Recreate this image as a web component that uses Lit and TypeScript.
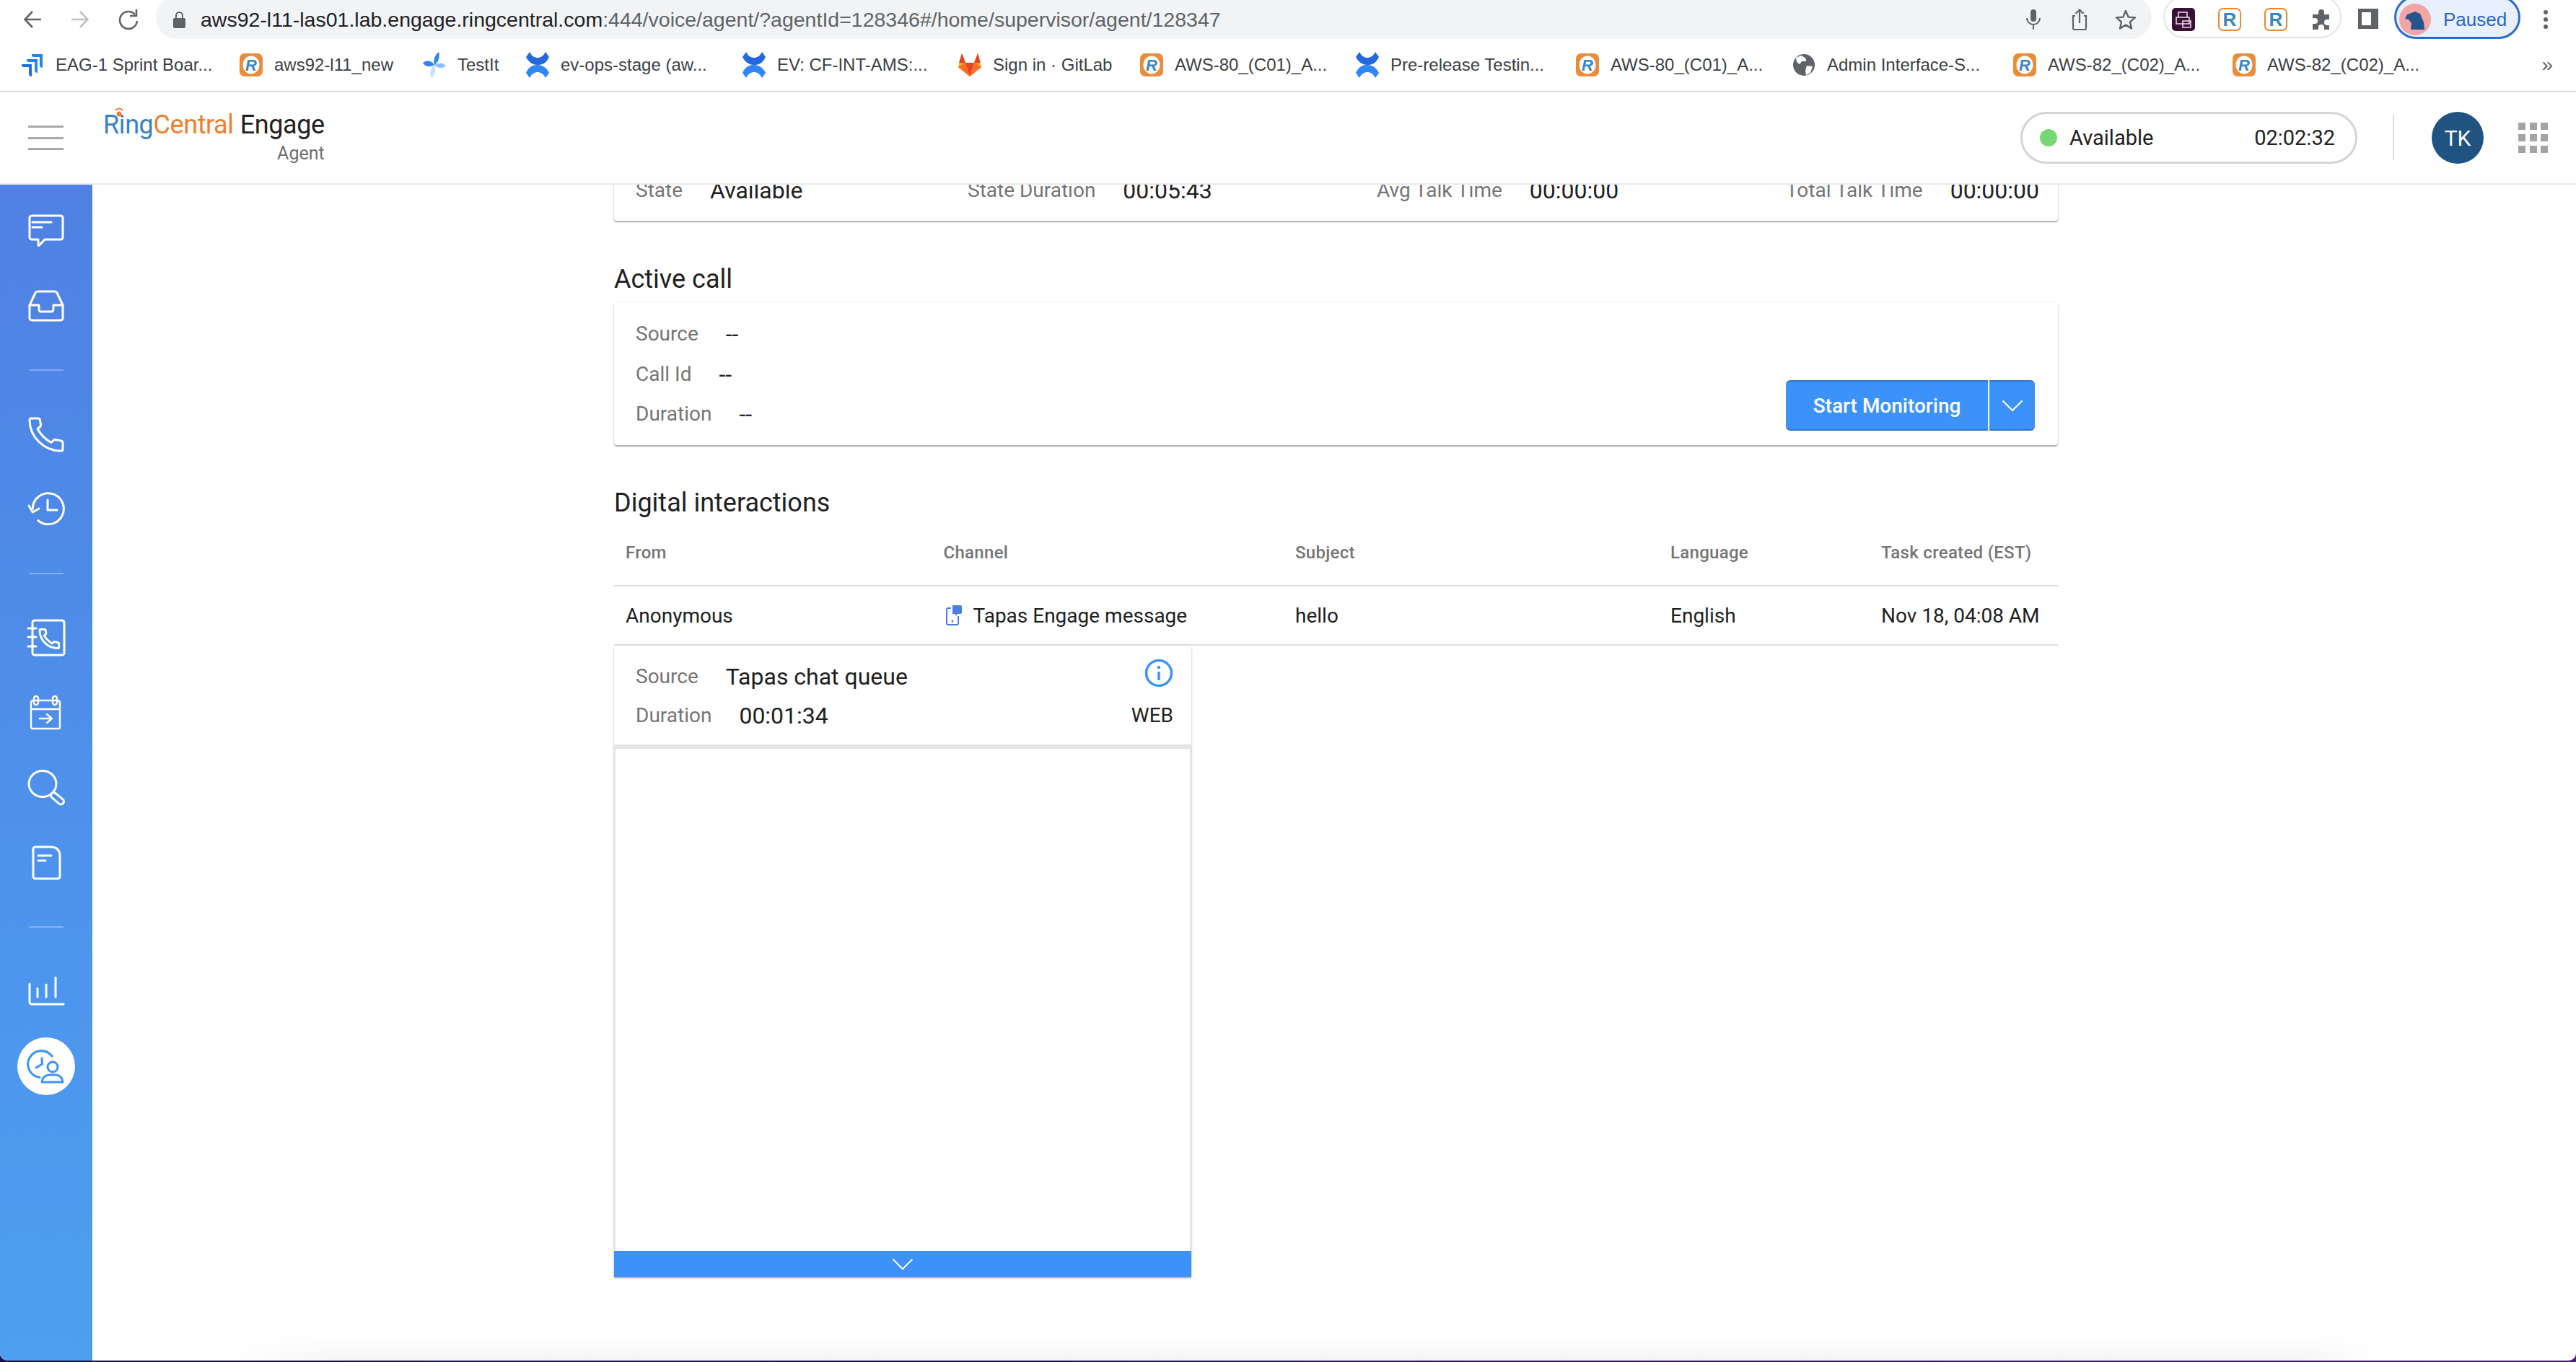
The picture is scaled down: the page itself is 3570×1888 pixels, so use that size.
import { LitElement, html, css } from 'lit';
import { customElement } from 'lit/decorators.js';

const PHONE_PATH = 'M7 6H17Q19 6 19.4 8L20.5 15Q20.6 17 19 18L16 20.5C20 28 27 35 35 39.5L38 36.5Q39.5 35 41.5 35.5L48.5 37Q51 37.5 51 40V49Q51 51 48 51C25 51 5.5 32 5 9Q5 6 7 6Z';

const rImg = html`<svg width="32" height="32" viewBox="0 0 32 32"><rect width="32" height="32" rx="7" fill="#ea8d3a"/><ellipse cx="16" cy="16" rx="11.5" ry="12.5" fill="#fff"/><text x="16" y="24" text-anchor="middle" font-family="Liberation Sans" font-size="22" font-weight="700" font-style="italic" fill="#3a86c0">R</text></svg>`;
const rExt = html`<svg width="32" height="32" viewBox="0 0 32 32"><rect x="1" y="1" width="30" height="30" rx="6" fill="#fff" stroke="#ef8632" stroke-width="2"/><text x="16" y="25" text-anchor="middle" font-family="Liberation Sans" font-size="26" font-weight="700" fill="#3a86c0">R</text></svg>`;
const jira = html`<svg width="32" height="32" viewBox="0 0 32 32" fill="#2d7ff0"><path d="M15 1H30V20Q26 20 26 16V5H17Q15 5 15 1Z"/><path d="M8 8H23V27Q19 27 19 23V12H10Q8 12 8 8Z" fill="#2684ff"/><path d="M1 15H15V32Q11 32 11 28V19H3Q1 19 1 15Z" fill="#1f6fe0"/></svg>`;
const testit = html`<svg width="32" height="36" viewBox="0 0 32 36"><path d="M16 18C14 10 17 4 22 0C24 7 22 14 16 18Z" fill="#2f86f0"/><path d="M16 18C24 14 29 15 32 20C26 23 20 23 16 18Z" fill="#8ec0f7"/><path d="M16 18C19 26 16 32 12 36C9 29 11 22 16 18Z" fill="#c4def9"/><path d="M16 18C8 22 3 20 0 15C6 11 12 12 16 18Z" fill="#2f86f0"/></svg>`;
const conf = html`<svg width="32" height="36" viewBox="0 0 32 36" fill="#2468e0"><path d="M0 7L5 0C8 6 12 8 16 8S24 6 27 0L32 7C28 16 22 18 16 18C8 18 3 13 0 7Z"/><path d="M32 29L27 36C24 30 20 28 16 28S8 30 5 36L0 29C4 20 10 18 16 18C24 18 29 23 32 29Z" fill="#2f86f8"/></svg>`;
const gitlab = html`<svg width="32" height="32" viewBox="0 0 32 32"><path d="M16 32L0 19L5 0L10 13H22L27 0L32 19Z" fill="#fca326"/><path d="M16 32L10 13H22Z" fill="#e24329"/><path d="M16 32L0 19L10 13Z" fill="#fc6d26"/><path d="M16 32L32 19L22 13Z" fill="#fc6d26"/><path d="M5 0L10 13H1Z" fill="#e24329"/><path d="M27 0L22 13H31Z" fill="#e24329"/></svg>`;
const globe = html`<svg width="32" height="32" viewBox="0 0 32 32"><circle cx="16" cy="16" r="15" fill="#5f6368"/><path d="M12 3C17 5 20 8 19 11L13 11L10 15L6 12L5 6ZM20 17L28 18L25 27L19 30L18 24Z" fill="#fff"/></svg>`;

const bookmarks = [
  { icon: jira, label: 'EAG-1 Sprint Boar...', w: 303 },
  { icon: rImg, label: 'aws92-l11_new', w: 254 },
  { icon: testit, label: 'TestIt', w: 143 },
  { icon: conf, label: 'ev-ops-stage (aw...', w: 300 },
  { icon: conf, label: 'EV: CF-INT-AMS:...', w: 299 },
  { icon: gitlab, label: 'Sign in · GitLab', w: 252 },
  { icon: rImg, label: 'AWS-80_(C01)_A...', w: 299 },
  { icon: conf, label: 'Pre-release Testin...', w: 305 },
  { icon: rImg, label: 'AWS-80_(C01)_A...', w: 300 },
  { icon: globe, label: 'Admin Interface-S...', w: 306 },
  { icon: rImg, label: 'AWS-82_(C02)_A...', w: 304 },
  { icon: rImg, label: 'AWS-82_(C02)_A...', w: 300 },
];

const railIcon = (body: unknown) => html`<svg class="rail-svg" width="56" height="56" viewBox="0 0 56 56">${body}</svg>`;

type RailEntry = { sep: true } | { sep?: false; active?: boolean; svg: unknown };

const rail: RailEntry[] = [
  { svg: html`<svg class="rail-svg" width="56" height="56" viewBox="0 0 56 56"><path d="M8 7H48a3 3 0 0 1 3 3V37a3 3 0 0 1-3 3H26L18.5 48Q17 49.5 17 47V40H8a3 3 0 0 1-3-3V10a3 3 0 0 1 3-3Z"/><path d="M9 16H35M9 23H22"/></svg>` },
  { svg: html`<svg class="rail-svg" width="56" height="56" viewBox="0 0 56 56"><path d="M5 27L13 10Q14 8 16 8H40Q42 8 43 10L51 27V45a3 3 0 0 1-3 3H8a3 3 0 0 1-3-3Z"/><path d="M5 27H18V33a3 3 0 0 0 3 3H35a3 3 0 0 0 3-3V27H51"/></svg>` },
  { sep: true },
  { svg: html`<svg class="rail-svg" width="56" height="56" viewBox="0 0 56 56"><path d=${PHONE_PATH}/></svg>` },
  { svg: html`<svg class="rail-svg" width="56" height="56" viewBox="0 0 56 56"><path d="M9.3 27A21.5 21.5 0 1 1 16.7 43.5"/><path d="M4 23L9.3 32L18 27"/><path d="M30 15V29H43"/></svg>` },
  { sep: true },
  { svg: html`<svg class="rail-svg" width="56" height="56" viewBox="0 0 56 56"><rect x="9" y="4" width="44" height="48" rx="3"/><path d="M3 15H14M3 27H14M3 40H14"/><g transform="translate(16 13) scale(.58)" style="stroke-width:5"><path d=${PHONE_PATH}/></g></svg>` },
  { svg: html`<svg class="rail-svg thin" width="56" height="56" viewBox="0 0 56 56"><path d="M11 11H43Q47 11 47 14V48Q47 50 45 50H9Q7 50 7 48V14Q7 11 11 11ZM7 23H47"/><rect x="11" y="5" width="6" height="12" rx="3"/><rect x="37" y="5" width="6" height="12" rx="3"/><path d="M19 36H36M29 30L36 36L29 42"/></svg>` },
  { svg: html`<svg class="rail-svg" width="56" height="56" viewBox="0 0 56 56"><ellipse cx="23" cy="22.6" rx="19" ry="18"/><rect x="0" y="0" width="21" height="8" rx="4" transform="translate(38 33) rotate(40)"/></svg>` },
  { svg: html`<svg class="rail-svg" width="56" height="56" viewBox="0 0 56 56"><path d="M13 6H34Q47 6 47 19V47a3 3 0 0 1-3 3H13a3 3 0 0 1-3-3V9a3 3 0 0 1 3-3Z"/><path d="M17 18H35M17 25H27"/></svg>` },
  { sep: true },
  { svg: html`<svg class="rail-svg" width="56" height="56" viewBox="0 0 56 56"><path d="M5 18V43a3 3 0 0 0 3 3H52"/><path d="M16 24V36M28 19V36M41 9V36"/></svg>` },
  { active: true, svg: html`<svg class="rail-svg blue" width="56" height="56" viewBox="0 0 56 56"><path d="M36 14A18.5 18.5 0 1 0 19 43.5"/><path d="M22 17L22.5 25L14 30"/><circle cx="37" cy="29" r="7"/><path d="M22 50Q23 41 32 40H42Q50 41 51 50Z"/></svg>` },
];

@customElement('app-root')
export class AppRoot extends LitElement {
  static styles = css`
    :host {
      display: block;
      width: 3570px;
      height: 1888px;
      overflow: hidden;
      background: linear-gradient(90deg, #16124e 0%, #1d1463 40%, #3a1878 65%, #4a1c82 100%);
      font-family: Roboto, sans-serif;
      color: #212121;
    }
    .window {
      height: 1886px;
      background: #fff;
      border-radius: 0 0 10px 10px;
      overflow: hidden;
      display: flex;
      flex-direction: column;
    }

    /* browser toolbar */
    .toolbar {
      height: 54px;
      flex: none;
      display: flex;
      align-items: flex-start;
      overflow: hidden;
      font-family: 'Liberation Sans', sans-serif;
    }
    .nav-btns {
      width: 216px;
      flex: none;
      height: 54px;
      display: flex;
      align-items: center;
      padding-left: 32px;
      box-sizing: border-box;
      gap: 40px;
    }
    .address {
      width: 2766px;
      flex: none;
      height: 60px;
      margin-top: -6px;
      padding: 6px 4px 0 24px;
      box-sizing: border-box;
      border-radius: 30px;
      background: #f1f3f5;
      display: flex;
      align-items: center;
    }
    .lock { margin-right: 21px; flex: none; }
    .url { flex: 1; font-size: 28.5px; color: #5f6368; white-space: nowrap; }
    .url b { font-weight: 400; color: #202124; }
    .addr-btn { width: 64px; display: flex; justify-content: center; flex: none; }
    .ext-pill {
      width: 247px;
      height: 59px;
      margin: -6px 0 0 16px;
      padding: 6px 0 0 10px;
      box-sizing: border-box;
      flex: none;
      display: flex;
      align-items: center;
      gap: 32px;
      border: 2px solid #e3e3e3;
      border-radius: 30px;
    }
    .side-panel { margin: 12px 22px 0 23px; flex: none; display: block; }
    .profile {
      width: 175px;
      height: 60px;
      margin-top: -6px;
      padding: 6px 0 0 4px;
      box-sizing: border-box;
      flex: none;
      display: flex;
      align-items: center;
      gap: 17px;
      border: 3px solid #2b6dcf;
      border-radius: 30px;
      background: #e8f0fe;
      color: #2a66c8;
      font-size: 26px;
    }
    .profile-pic {
      width: 44px;
      height: 44px;
      flex: none;
      border-radius: 50%;
      background: #f2a5a5;
    }
    .kebab { margin: 13px 0 0 31px; display: block; flex: none; }

    /* bookmarks */
    .bookmarks {
      height: 74px;
      flex: none;
      box-sizing: border-box;
      padding-left: 29px;
      padding-right: 32px;
      display: flex;
      align-items: center;
      border-bottom: 2px solid #dcdcdc;
      font-family: 'Liberation Sans', sans-serif;
      font-size: 24px;
      color: #3c4043;
    }
    .bm { display: flex; align-items: center; gap: 16px; white-space: nowrap; flex: none; }
    .bm svg { flex: none; display: block; }
    .more { margin-left: auto; font-size: 28px; color: #5f6368; }

    /* app header */
    .app-header {
      height: 128px;
      flex: none;
      box-sizing: border-box;
      border-bottom: 2px solid #e8e8e8;
      display: flex;
      align-items: center;
      padding-left: 39px;
    }
    .burger { width: 49px; display: flex; flex-direction: column; gap: 12.5px; flex: none; }
    .burger i { display: block; height: 3px; background: #a8a8a8; }
    .logo { margin-left: 55px; display: flex; flex-direction: column; align-items: flex-end; position: relative; }
    .logo-main { font-size: 36px; line-height: 42px; letter-spacing: -0.4px; white-space: nowrap; }
    .logo-main .ring { color: #3a82c4; }
    .logo-main .central { color: #ef7f2d; margin-right: 9px; }
    .logo-dot { position: absolute; left: 14px; top: -4px; }
    .logo-sub { font-size: 25px; line-height: 34px; color: #6f6f6f; margin-top: 2px; }
    .status {
      margin-left: auto;
      width: 467px;
      height: 72px;
      box-sizing: border-box;
      border: 3px solid #d4d4d4;
      border-radius: 36px;
      display: flex;
      align-items: center;
      padding: 0 28px 0 24px;
      font-size: 29px;
    }
    .status-dot { width: 24px; height: 24px; border-radius: 50%; background: #75d874; margin-right: 17px; }
    .status-time { margin-left: auto; }
    .hdr-sep { width: 2px; height: 62px; background: #dcdcdc; margin-left: 49px; }
    .avatar {
      width: 72px;
      height: 72px;
      margin-left: 52px;
      border-radius: 50%;
      background: #1f5482;
      color: #fff;
      font-size: 30px;
      display: flex;
      align-items: center;
      justify-content: center;
    }
    .apps { margin: 0 39px 0 48px; display: grid; grid-template-columns: repeat(3, 10px); grid-auto-rows: 10px; gap: 6px 5.5px; }
    .apps i { background: #a3a3a3; }

    /* body */
    .body { flex: 1; min-height: 0; display: flex; }
    .rail {
      width: 128px;
      flex: none;
      box-sizing: border-box;
      padding-top: 12px;
      background: linear-gradient(180deg, #5081e3 0%, #4c9ff1 100%);
      border-bottom-left-radius: 10px;
      display: flex;
      flex-direction: column;
    }
    .rail-item { height: 104px; flex: none; display: flex; align-items: center; justify-content: center; }
    .rail-item.on > div {
      width: 80px;
      height: 80px;
      border-radius: 50%;
      background: #fff;
      display: flex;
      align-items: center;
      justify-content: center;
    }
    .rail-sep { height: 74px; flex: none; display: flex; align-items: center; justify-content: center; }
    .rail-sep i { display: block; width: 48px; height: 2px; background: rgba(255, 255, 255, 0.3); }
    .rail-svg { display: block; fill: none; stroke: #fff; stroke-width: 3; stroke-linecap: round; stroke-linejoin: round; }
    .rail-svg.thin { stroke-width: 2.4; }
    .rail-svg.blue { stroke: #3d92f9; }

    .main { flex: 1; min-width: 0; position: relative; overflow: hidden; }
    .page { width: 2001px; margin: -36px 0 0 723px; }
    .bottom-fade {
      position: absolute;
      left: 180px;
      right: 270px;
      bottom: 0;
      height: 36px;
      background: linear-gradient(180deg, rgba(244, 244, 244, 0), #f4f4f4);
      -webkit-mask-image: linear-gradient(90deg, transparent, #000 6%, #000 96%, transparent);
      mask-image: linear-gradient(90deg, transparent, #000 6%, #000 96%, transparent);
    }

    .card {
      background: #fff;
      border-radius: 4px;
      box-shadow: 0 2px 2px rgba(0, 0, 0, 0.3), 0 0 5px rgba(0, 0, 0, 0.08);
    }
    .kv { display: flex; gap: 38px; line-height: 40px; white-space: nowrap; }
    .kv .k { font-size: 28px; color: #757575; }
    .kv .v { font-size: 32px; color: #212121; }

    .stats {
      padding: 24px 32px 22px 30px;
      display: grid;
      grid-template-columns: 460px 567px 567px 1fr;
    }
    h2 {
      margin: 57px 0 9px;
      font-size: 36px;
      font-weight: 400;
      line-height: 48px;
    }
    .active-call {
      box-sizing: border-box;
      height: 197px;
      padding: 23px 32px 20px 30px;
      display: flex;
      justify-content: space-between;
      align-items: flex-end;
    }
    .active-call .rows { display: flex; flex-direction: column; gap: 15.5px; align-self: flex-start; }
    .split { display: flex; gap: 2px; flex: none; }
    .split > div {
      height: 70px;
      box-sizing: border-box;
      background: #3d92f9;
      border: solid #2f74cc;
      border-width: 2px 0;
      color: #fff;
      font-size: 28px;
      font-weight: 500;
      display: flex;
      align-items: center;
      justify-content: center;
    }
    .split .go { width: 280px; border-radius: 6px 0 0 6px; }
    .split .caret { width: 63px; border-radius: 0 6px 6px 0; }

    h2.digital { margin: 56px 0 0; }
    .row {
      display: grid;
      grid-template-columns: 440.5px 487.5px 520px 292px 1fr;
      padding-left: 16px;
      align-items: center;
      border-bottom: 2px solid #e0e0e0;
      white-space: nowrap;
    }
    .row.head { height: 90px; font-size: 24px; font-weight: 500; color: #757575; letter-spacing: 0.3px; }
    .row.data { height: 80px; font-size: 28px; color: #212121; }
    .channel { display: flex; align-items: center; gap: 16px; }
    .channel svg { margin-left: 3px; }

    .chat-card {
      width: 800px;
      height: 875px;
      margin-top: 0;
      display: flex;
      flex-direction: column;
      border-radius: 4px 4px 0 0;
    }
    .chat-head {
      flex: none;
      height: 137px;
      box-sizing: border-box;
      padding: 23px 25px 20px 30px;
      display: flex;
      justify-content: space-between;
    }
    .chat-head .rows { display: flex; flex-direction: column; gap: 14px; }
    .chat-side { display: flex; flex-direction: column; align-items: flex-end; justify-content: space-between; }
    .chat-side svg { display: block; margin: -5px 0 0; }
    .web { font-size: 28px; line-height: 40px; margin-top: -6px; }
    .chat-band { flex: none; height: 6px; background: #e5e5e5; }
    .chat-body { flex: 1; border: solid #e4e4e4; border-width: 0 2px; }
    .chat-foot {
      flex: none;
      height: 36px;
      background: #3d92f9;
      display: flex;
      align-items: center;
      justify-content: center;
    }
  `;

  render() {
    return html`
      <div class="window">
        ${this.renderToolbar()}
        <div class="bookmarks">
          ${bookmarks.map(b => html`<div class="bm" style="width:${b.w}px">${b.icon}<span>${b.label}</span></div>`)}
          <span class="more">»</span>
        </div>
        ${this.renderHeader()}
        <div class="body">
          <nav class="rail">
            ${rail.map(r => r.sep
              ? html`<div class="rail-sep"><i></i></div>`
              : html`<div class="rail-item ${r.active ? 'on' : ''}"><div>${r.svg}</div></div>`)}
          </nav>
          <main class="main">
            <div class="page">
              <div class="card stats">
                ${this.kv('State', 'Available')}
                ${this.kv('State Duration', '00:05:43')}
                ${this.kv('Avg Talk Time', '00:00:00')}
                ${this.kv('Total Talk Time', '00:00:00')}
              </div>
              <h2>Active call</h2>
              <div class="card active-call">
                <div class="rows">
                  ${this.kv('Source', '--')}
                  ${this.kv('Call Id', '--')}
                  ${this.kv('Duration', '--')}
                </div>
                <div class="split">
                  <div class="go">Start Monitoring</div>
                  <div class="caret">${this.chevron()}</div>
                </div>
              </div>
              <h2 class="digital">Digital interactions</h2>
              <div class="row head">
                <span>From</span><span>Channel</span><span>Subject</span><span>Language</span><span>Task created (EST)</span>
              </div>
              <div class="row data">
                <span>Anonymous</span>
                <span class="channel">
                  <svg width="22" height="28" viewBox="0 0 22 28" fill="none"><path d="M7 4H3a2 2 0 0 0-2 2V25a2 2 0 0 0 2 2H15a2 2 0 0 0 2-2V15" stroke="#4a7fe0" stroke-width="2"/><path d="M9 0H20a2 2 0 0 1 2 2V10a2 2 0 0 1-2 2H16L13 15V12H9a0 0 0 0 1 0 0Z" fill="#4a7fe0"/><circle cx="9" cy="22" r="1.5" fill="#4a7fe0"/></svg>
                  Tapas Engage message
                </span>
                <span>hello</span>
                <span>English</span>
                <span>Nov 18, 04:08 AM</span>
              </div>
              <div class="card chat-card">
                <div class="chat-head">
                  <div class="rows">
                    ${this.kv('Source', 'Tapas chat queue')}
                    ${this.kv('Duration', '00:01:34')}
                  </div>
                  <div class="chat-side">
                    <svg width="40" height="40" viewBox="0 0 40 40" fill="none"><circle cx="20" cy="20" r="17.5" stroke="#3d92f9" stroke-width="3.5"/><path d="M20 18V30" stroke="#3d92f9" stroke-width="3.5"/><circle cx="20" cy="12" r="2.2" fill="#3d92f9"/></svg>
                    <span class="web">WEB</span>
                  </div>
                </div>
                <div class="chat-band"></div>
                <div class="chat-body"></div>
                <div class="chat-foot">${this.chevron()}</div>
              </div>
            </div>
            <div class="bottom-fade"></div>
          </main>
        </div>
      </div>
    `;
  }

  kv(k: string, v: string) {
    return html`<div class="kv"><span class="k">${k}</span><span class="v">${v}</span></div>`;
  }

  chevron() {
    return html`<svg width="30" height="17" viewBox="0 0 30 17" fill="none"><path d="M1.5 1.5L15 15L28.5 1.5" stroke="#fff" stroke-width="2"/></svg>`;
  }

  renderToolbar() {
    return html`
      <div class="toolbar">
        <div class="nav-btns">
          <svg width="26" height="26" viewBox="0 0 26 26" fill="none" stroke="#5f6368" stroke-width="2.6"><path d="M25 13H3M13 2L2.5 13L13 24"/></svg>
          <svg width="26" height="26" viewBox="0 0 26 26" fill="none" stroke="#bdc1c6" stroke-width="2.6"><path d="M1 13H23M13 2L23.5 13L13 24"/></svg>
          <svg width="28" height="30" viewBox="0 0 28 30" fill="none" stroke="#5f6368" stroke-width="2.6"><path d="M23 8A12 12 0 1 0 26 17"/><path d="M25 1V10H16" /></svg>
        </div>
        <div class="address">
          <svg class="lock" width="17" height="24" viewBox="0 0 17 24"><path d="M4 11V6.5a4.5 4.5 0 0 1 9 0V11" fill="none" stroke="#5f6368" stroke-width="2"/><rect y="10" width="17" height="14" rx="2" fill="#5f6368"/></svg>
          <div class="url"><b>aws92-l11-las01.lab.engage.ringcentral.com</b>:444/voice/agent/?agentId=128346#/home/supervisor/agent/128347</div>
          <div class="addr-btn"><svg width="20" height="28" viewBox="0 0 20 28" fill="none"><rect x="6" y="0" width="8" height="17" rx="4" fill="#5f6368"/><path d="M1 12a9 9 0 0 0 18 0M10 21V28" stroke="#5f6368" stroke-width="2"/></svg></div>
          <div class="addr-btn"><svg width="22" height="30" viewBox="0 0 22 30" fill="none" stroke="#5f6368" stroke-width="2.2"><path d="M5 10H2V27a2 2 0 0 0 2 2H18a2 2 0 0 0 2-2V10H17M11 20V2M5.5 7L11 1.5L16.5 7"/></svg></div>
          <div class="addr-btn"><svg width="28" height="28" viewBox="0 0 28 28" fill="none" stroke="#5f6368" stroke-width="2.4" stroke-linejoin="round"><path d="M14 2L17.6 10.6L27 11.4L20 17.4L22 26.4L14 21.6L6 26.4L8 17.4L1 11.4L10.4 10.6Z"/></svg></div>
        </div>
        <div class="ext-pill">
          <svg width="32" height="32" viewBox="0 0 32 32"><rect width="32" height="32" rx="5" fill="#3b1038"/><path d="M9 6H21V13H9ZM6 13H24V22H6ZM15 18H26V27H15Z" fill="none" stroke="#e8dce8" stroke-width="1.6"/></svg>
          ${rExt}${rExt}
          <svg width="30" height="30" viewBox="0 0 30 30" fill="#5f6368"><path d="M11 5a4 4 0 0 1 8 0V8H26V15H23a4 4 0 0 0 0 8H26V29H19V26a4 4 0 0 0-8 0V29H3V21H6a4 4 0 0 0 0-8H3V8H11Z"/></svg>
        </div>
        <svg class="side-panel" width="28" height="28" viewBox="0 0 28 28" fill="none"><rect x="2.5" y="2.5" width="23" height="23" stroke="#5f6368" stroke-width="5"/><rect x="18" y="0" width="10" height="28" fill="#5f6368"/></svg>
        <div class="profile">
          <div class="profile-pic"><svg width="44" height="44" viewBox="0 0 44 44"><path d="M11 15L22 11L29 14L34 26L35 36L16 36L17 27L13 22L8 21Z" fill="#24558c"/></svg></div>
          <span>Paused</span>
        </div>
        <svg class="kebab" width="8" height="28" viewBox="0 0 8 28" fill="#5f6368"><circle cx="4" cy="4" r="3"/><circle cx="4" cy="14" r="3"/><circle cx="4" cy="24" r="3"/></svg>
      </div>
    `;
  }

  renderHeader() {
    return html`
      <header class="app-header">
        <div class="burger"><i></i><i></i><i></i></div>
        <div class="logo">
          <div class="logo-main"><span class="ring">Ring</span><span class="central">Central</span>Engage</div>
          <svg class="logo-dot" width="16" height="14" viewBox="0 0 16 14" fill="none"><circle cx="8" cy="10" r="3.5" fill="#ef7f2d"/><path d="M3 5Q8 0 13 5" stroke="#ef7f2d" stroke-width="2"/></svg>
          <div class="logo-sub">Agent</div>
        </div>
        <div class="status">
          <span class="status-dot"></span>
          <span>Available</span>
          <span class="status-time">02:02:32</span>
        </div>
        <div class="hdr-sep"></div>
        <div class="avatar">TK</div>
        <div class="apps">${Array.from({ length: 9 }, () => html`<i></i>`)}</div>
      </header>
    `;
  }
}
